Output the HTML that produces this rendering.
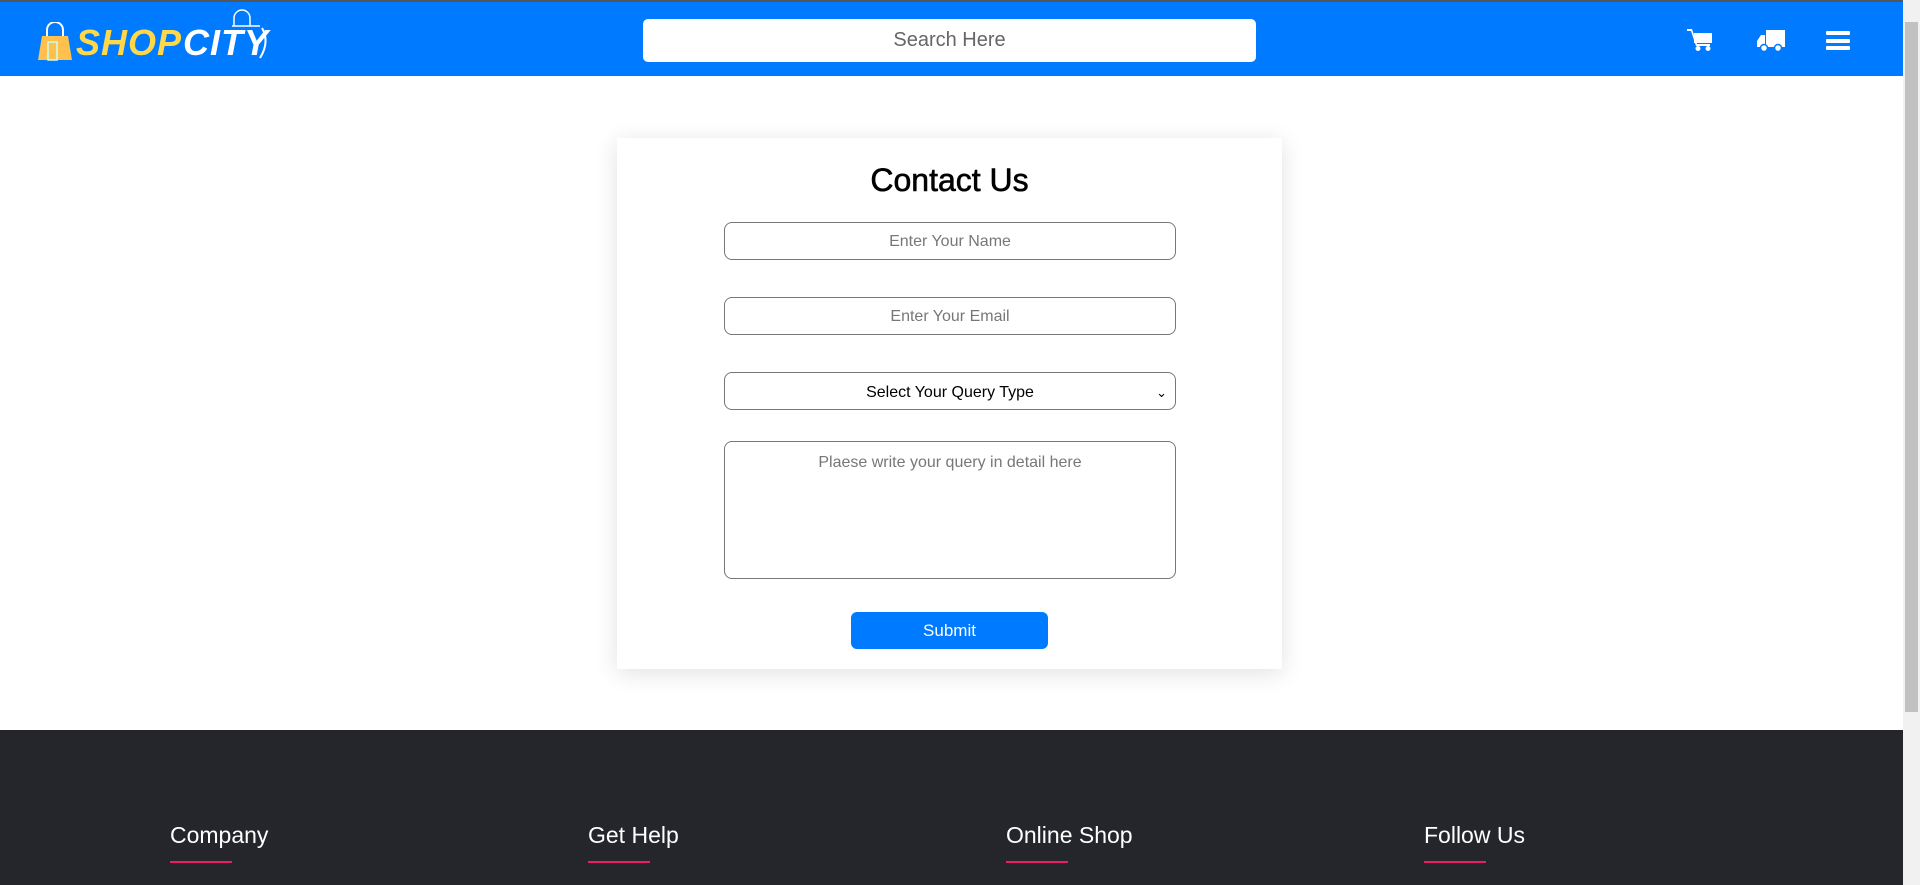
<!DOCTYPE html>
<html><head><meta charset="utf-8">
<style>
*{box-sizing:border-box;margin:0;padding:0}
body{width:1920px;height:885px;overflow:hidden;font-family:"Liberation Sans",sans-serif;background:#fff;position:relative}
.nav{position:absolute;left:0;top:0;width:1903px;height:76px;background:#007bff;border-top:2px solid #555}
.search{position:absolute;left:643px;top:17px;width:613px;height:43px;background:#fff;border-radius:5px;text-align:center;line-height:43px;font-size:20px;color:#666}
.logo{position:absolute;left:38px;top:16px;height:50px;font-style:italic;font-weight:bold;font-size:36px;line-height:50px;letter-spacing:1px}
.sb{position:absolute;right:0;top:0;width:17px;height:885px;background:#f1f1f1}
.sb .th{position:absolute;left:2px;top:22px;width:13px;height:690px;background:#c1c1c1}
.card{position:absolute;left:617px;top:138px;width:665px;height:531px;background:#fff;box-shadow:0 4px 22px rgba(0,0,0,.12)}
h1{position:absolute;left:0;width:100%;top:24px;text-align:center;font-size:32px;font-weight:normal;color:#000;-webkit-text-stroke:.6px #000}
.f{position:absolute;left:107px;width:452px;border:1px solid #777;border-radius:8px;text-align:center;font-size:16px;color:#777}
.btn{position:absolute;left:234px;top:474px;width:197px;height:37px;background:#007bff;border-radius:6px;color:#fff;text-align:center;line-height:37px;font-size:17px}
.foot{position:absolute;left:0;top:730px;width:1903px;height:155px;background:#24262b}
.foot h4{position:absolute;top:92px;color:#fff;font-size:23px;font-weight:normal}
.foot h4:after{content:"";position:absolute;left:0;top:39px;width:62px;height:2px;background:#e91e63}
</style></head><body>
<div class="nav">
 <div class="logo">
  <svg width="34" height="42" viewBox="0 0 34 42" style="position:absolute;left:0;top:4px"><path d="M9 14V8a8 8 0 0 1 16 0v6" fill="none" stroke="#fff" stroke-width="2"/><path d="M4 14h26l4 24H0z" fill="#ffc04d"/><rect x="10" y="20" width="9" height="18" fill="none" stroke="#cfe" stroke-width="1.5"/></svg>
  <span style="position:absolute;left:38px;top:0;color:#ffd84a">SHOP</span><span style="position:absolute;left:145px;top:0;color:#fff">CITY</span>
  <svg width="40" height="58" viewBox="0 0 40 58" style="position:absolute;left:192px;top:-10px"><path d="M4 18V10a8 8 0 0 1 16 0v8M2 18h28" fill="none" stroke="#fff" stroke-width="1.5"/><path d="M32 20q8 14-2 30" fill="none" stroke="#fff" stroke-width="2"/></svg>
 </div>
 <div class="search">Search Here</div>
 <svg style="position:absolute;left:1687px;top:27px" width="26" height="22" viewBox="0 0 26 22" fill="#fff"><rect x="7" y="4" width="18" height="10"/><path d="M0 0h5l5 15h13v2H9L4 2H0z"/><circle cx="11" cy="19.5" r="2.5"/><circle cx="21" cy="19.5" r="2.5"/></svg>
 <svg style="position:absolute;left:1757px;top:28px" width="28" height="22" viewBox="0 0 28 22" fill="#fff"><path d="M9 0h19v17H9zM8 5H4L0 11v6h8z"/><circle cx="7" cy="18" r="3.5" fill="#fff" stroke="#007bff" stroke-width="1.5"/><circle cx="21" cy="18" r="3.5" fill="#fff" stroke="#007bff" stroke-width="1.5"/></svg>
 <svg style="position:absolute;left:1826px;top:29px" width="24" height="20" viewBox="0 0 24 20" fill="#fff"><rect y="0" width="24" height="4" rx="1"/><rect y="8" width="24" height="4" rx="1"/><rect y="15" width="24" height="4" rx="1"/></svg>
</div>
<div class="card">
 <h1>Contact Us</h1>
 <div class="f" style="top:84px;height:38px;line-height:38px">Enter Your Name</div>
 <div class="f" style="top:159px;height:38px;line-height:38px">Enter Your Email</div>
 <div class="f" style="top:234px;height:38px;line-height:40px;color:#000">Select Your Query Type<span style="position:absolute;right:8px;top:0;font-size:13px">&#8964;</span></div>
 <div class="f" style="top:303px;height:138px;padding-top:12px">Plaese write your query in detail here</div>
 <div class="btn">Submit</div>
</div>
<div class="foot">
 <h4 style="left:170px">Company</h4>
 <h4 style="left:588px">Get Help</h4>
 <h4 style="left:1006px">Online Shop</h4>
 <h4 style="left:1424px">Follow Us</h4>
</div>
<div class="sb"><div class="th"></div></div>
</body></html>
